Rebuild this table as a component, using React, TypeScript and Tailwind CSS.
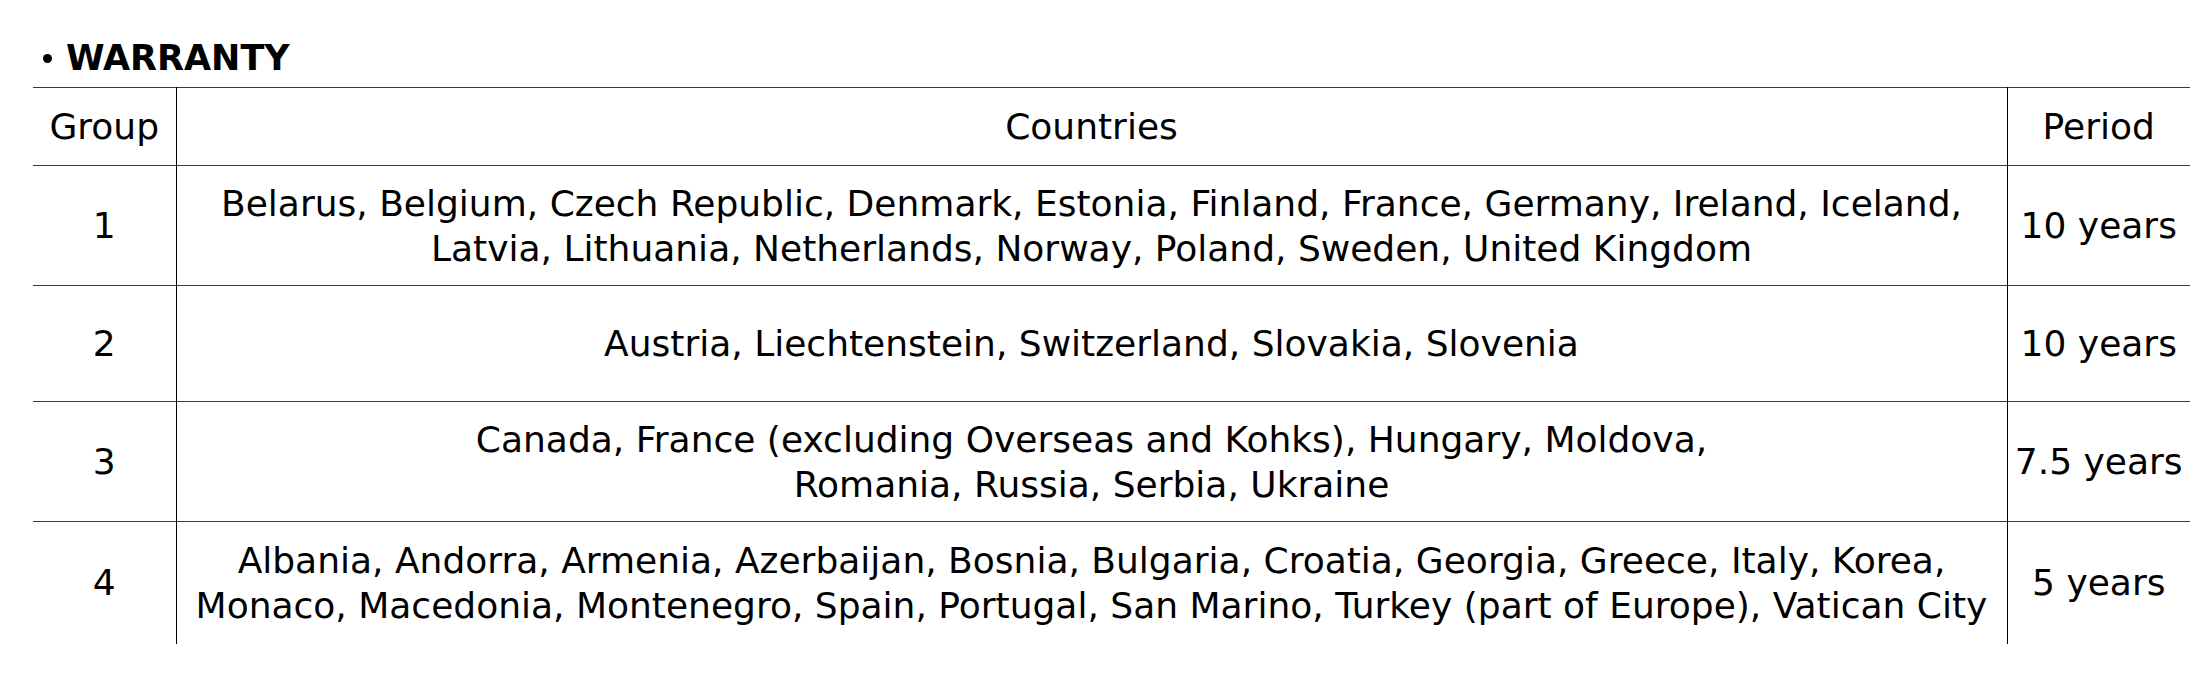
import React from "react";

interface WarrantyRow {
  group: string;
  lines: string[];
  period: string;
}

const ROWS: WarrantyRow[] = [
  {
    group: "1",
    lines: [
      "Belarus, Belgium, Czech Republic, Denmark, Estonia, Finland, France, Germany, Ireland, Iceland,",
      "Latvia, Lithuania, Netherlands, Norway, Poland, Sweden, United Kingdom",
    ],
    period: "10 years",
  },
  {
    group: "2",
    lines: ["Austria, Liechtenstein, Switzerland, Slovakia, Slovenia"],
    period: "10 years",
  },
  {
    group: "3",
    lines: [
      "Canada, France (excluding Overseas and Kohks), Hungary, Moldova,",
      "Romania, Russia, Serbia, Ukraine",
    ],
    period: "7.5 years",
  },
  {
    group: "4",
    lines: [
      "Albania, Andorra, Armenia, Azerbaijan, Bosnia, Bulgaria, Croatia, Georgia, Greece, Italy, Korea,",
      "Monaco, Macedonia, Montenegro, Spain, Portugal, San Marino, Turkey (part of Europe), Vatican City",
    ],
    period: "5 years",
  },
];

const rowHeights = ["h-[120px]", "h-[116px]", "h-[120px]", "h-[122px]"];

export default function App() {
  return (
    <div className="min-h-[683px] w-[2210px] bg-white pl-[33px] font-['DejaVu_Sans',sans-serif] text-black">
      <div className="flex h-[87px] items-center pl-[10px] pt-[30px] text-[35px] font-bold">
        <span className="mr-[14px] h-[9px] w-[9px] rounded-full bg-black" />
        <span>WARRANTY</span>
      </div>

      <table className="w-[2157px] table-fixed border-collapse text-[36px] leading-[45px]">
        <colgroup>
          <col className="w-[143px]" />
          <col className="w-[1831px]" />
          <col className="w-[183px]" />
        </colgroup>
        <thead>
          <tr className="h-[78px] border-y border-[#3a3a3a]">
            <th className="border-r border-black text-center font-normal">
              Group
            </th>
            <th className="border-r border-black text-center font-normal">
              Countries
            </th>
            <th className="text-center font-normal">Period</th>
          </tr>
        </thead>
        <tbody>
          {ROWS.map((row, i) => (
            <tr
              key={row.group}
              className={`${rowHeights[i]} ${
                i < ROWS.length - 1 ? "border-b border-[#3a3a3a]" : ""
              }`}
            >
              <td className="border-r border-black text-center">{row.group}</td>
              <td className="border-r border-black px-[10px] text-center whitespace-nowrap">
                {row.lines.map((line) => (
                  <div key={line}>{line}</div>
                ))}
              </td>
              <td className="text-center whitespace-nowrap">{row.period}</td>
            </tr>
          ))}
        </tbody>
      </table>
    </div>
  );
}
